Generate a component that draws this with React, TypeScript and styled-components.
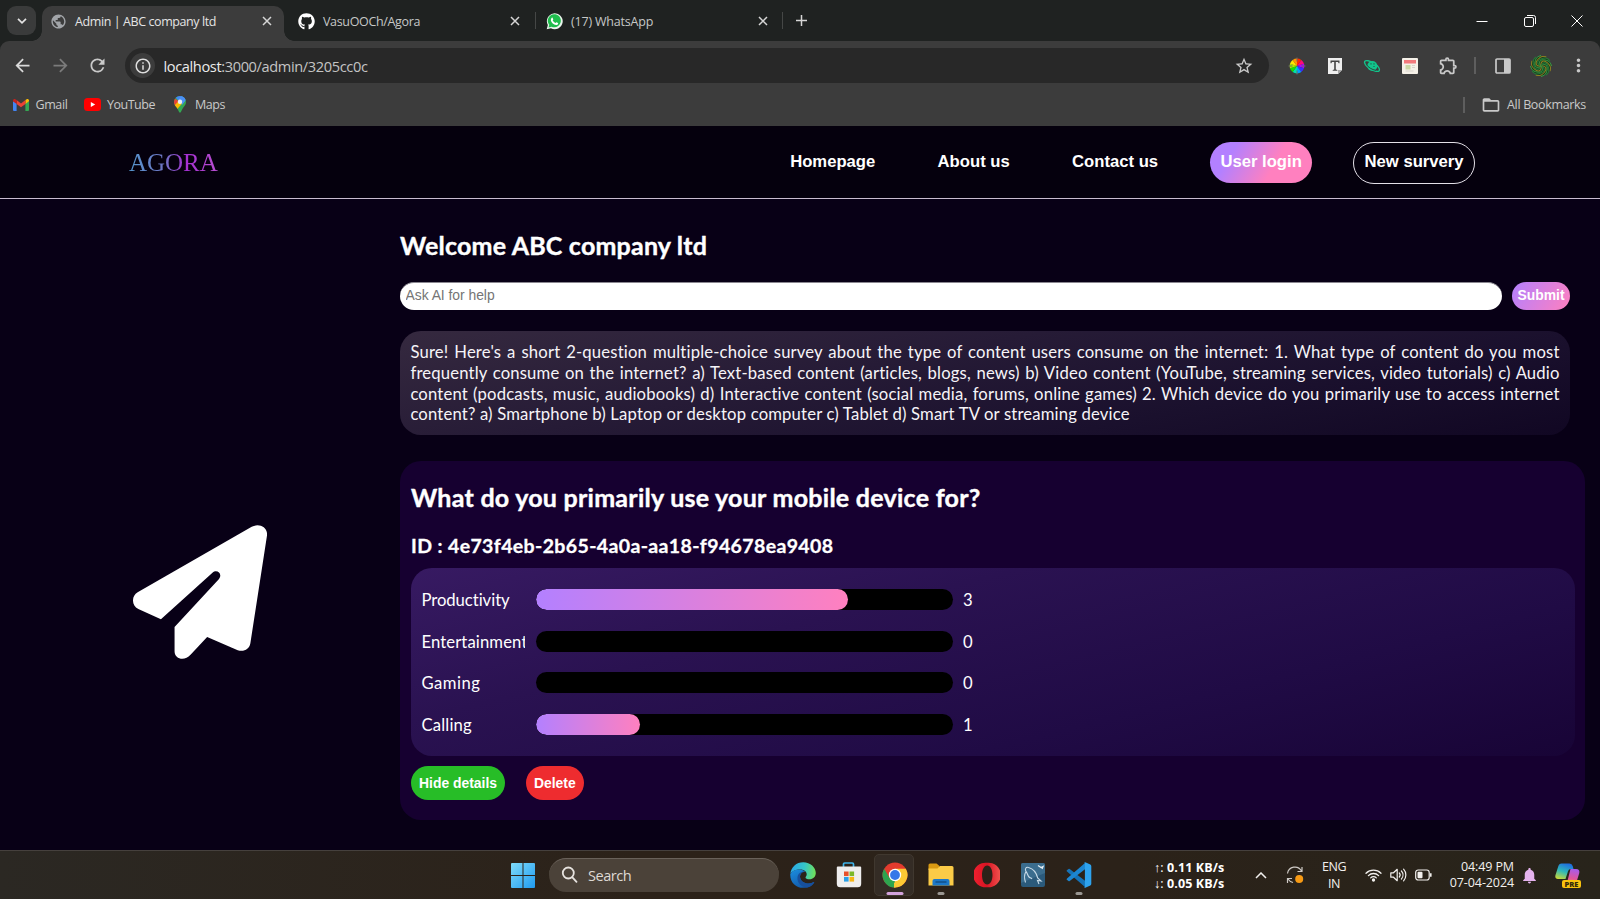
import React from "react";
import styled, { createGlobalStyle, css } from "styled-components";
import { FaGithub } from "react-icons/fa";
import {
  MdArrowBack,
  MdArrowForward,
  MdRefresh,
  MdInfoOutline,
  MdStarBorder,
  MdOutlineExtension,
  MdMoreVert,
  MdPublic,
  MdFolderOpen,
  MdNotifications,
} from "react-icons/md";

const UI = `"Open Sans", "Noto Sans", sans-serif`;
const BODY = `Lato, "Open Sans", sans-serif`;
const ARIAL = `"Liberation Sans", Arial, sans-serif`;
const ACCENT = "#b380ff, #ff80bf";

const GlobalStyle = createGlobalStyle`
  * { box-sizing: border-box; }
  html, body { margin: 0; padding: 0; background: #080016; overflow: hidden; }
  svg { display: block; flex: none; }
`;

const Screen = styled.div`
  width: 1600px;
  height: 899px;
  display: flex;
  flex-direction: column;
  overflow: hidden;
  font-family: ${UI};
`;

/* ---------- browser chrome ---------- */

const TabStrip = styled.div`
  height: 41px;
  flex: none;
  display: flex;
  align-items: stretch;
  padding-left: 7px;
  background: #1f2221;
`;

const TabSearch = styled.div`
  width: 29px;
  height: 29px;
  margin: 6px 6px 0 0;
  border-radius: 9px;
  background: #3a3b3b;
  display: grid;
  place-items: center;
`;

const Tab = styled.div<{ $width: number; $pad: number; $end: number; $active?: boolean; $ls: number }>`
  position: relative;
  width: ${(p) => p.$width}px;
  margin-top: 6px;
  padding: 0 ${(p) => p.$end}px 5px ${(p) => p.$pad}px;
  display: flex;
  align-items: center;
  gap: 8px;
  font-size: 12.5px;
  letter-spacing: ${(p) => p.$ls}px;
  color: #c6c8c7;
  ${(p) =>
    p.$active &&
    css`
      background: #3c3c3c;
      border-radius: 10px 10px 0 0;
      color: #e4e4e4;
      &::before,
      &::after {
        content: "";
        position: absolute;
        bottom: 0;
        width: 10px;
        height: 10px;
      }
      &::before {
        left: -10px;
        background: radial-gradient(circle at 0 0, transparent 9.5px, #3c3c3c 10px);
      }
      &::after {
        right: -10px;
        background: radial-gradient(circle at 100% 0, transparent 9.5px, #3c3c3c 10px);
      }
    `}
`;

const TabTitle = styled.span`
  flex: 1;
  padding-top: 1px;
  white-space: nowrap;
`;

const TabDivider = styled.i`
  width: 1px;
  height: 17px;
  margin-top: 12px;
  background: #454746;
`;

const NewTab = styled.div`
  width: 36px;
  display: grid;
  place-items: center;
`;

const WindowButtons = styled.div`
  margin: 0 17px 0 auto;
  display: flex;
  align-items: center;
  gap: 35.5px;
`;

const Toolbar = styled.div`
  height: 42px;
  position: relative;
  background: #3c3c3c;
  border-radius: 9px 9px 0 0;
  padding: 7px 0 0 12px;
  display: flex;
  align-items: center;
  color: #c9c9c9;
`;

const ToolbarWrap = styled.div`
  flex: none;
  background: #1f2221;
`;

const NavIcons = styled.div`
  width: 113px;
  flex: none;
  display: flex;
  gap: 16.5px;
`;

const Dimmed = styled.span`
  color: #7b7b7b;
`;

const Omnibox = styled.div`
  width: 1144px;
  flex: none;
  height: 35px;
  border-radius: 18px;
  background: #282828;
  padding: 0 15px 0 5px;
  display: flex;
  align-items: center;
`;

const SiteInfo = styled.span`
  width: 25px;
  height: 25px;
  margin-right: 8.5px;
  border-radius: 50%;
  background: #3c3c3c;
  display: grid;
  place-items: center;
  color: #dedede;
`;

const Url = styled.span`
  flex: 1;
  font-size: 14.6px;
  letter-spacing: -0.377px;
  color: #c4c4c4;
  b {
    font-weight: 400;
    color: #ececec;
  }
`;

const Extensions = styled.div`
  flex: 1;
  padding-left: 17px;
  display: flex;
  align-items: center;
`;

const Slot = styled.span<{ $w: number }>`
  width: ${(p) => p.$w}px;
  flex: none;
  display: grid;
  place-items: center;
`;

const Bar = styled.i<{ $h: number }>`
  width: 1.5px;
  height: ${(p) => p.$h}px;
  background: #5e5e5e;
`;

const Bookmarks = styled.div`
  height: 43px;
  flex: none;
  padding: 0 14px 0 13px;
  display: flex;
  align-items: center;
  background: #3c3c3c;
  font-size: 12.5px;
  color: #c9c9c9;
`;

const Bookmark = styled.div<{ $gap: number; $after?: number; $ls: number }>`
  display: flex;
  align-items: center;
  gap: ${(p) => p.$gap}px;
  margin-right: ${(p) => p.$after ?? 0}px;
  letter-spacing: ${(p) => p.$ls}px;
`;

const AllBookmarks = styled(Bookmark)`
  margin-left: auto;
`;

/* ---------- site ---------- */

const Site = styled.div`
  flex: 1;
  min-height: 0;
  display: flex;
  flex-direction: column;
  background: #080016;
  color: #fff;
`;

const Header = styled.header`
  height: 73px;
  flex: none;
  padding: 0 125px 0 129px;
  display: flex;
  align-items: center;
  justify-content: space-between;
  background: #05000d;
  border-bottom: 1px solid #c9bccf;
`;

const Brand = styled.span`
  margin-top: 2px;
  font: 25px "Liberation Serif", "Times New Roman", serif;
  letter-spacing: -0.05px;
  background: linear-gradient(90deg, #5596cd 0%, #6f74c4 40%, #a52fd2 64%, #b84fd0 100%);
  background-clip: text;
  -webkit-background-clip: text;
  color: transparent;
`;

const Menu = styled.nav`
  display: flex;
  align-items: center;
  gap: 41.5px;
  margin-top: 1px;
`;

const MenuLink = styled.a<{ $kind?: "filled" | "outline" }>`
  height: 41px;
  padding: 0 10.4px 2px;
  border-radius: 21px;
  display: flex;
  align-items: center;
  font: bold 16.67px ${ARIAL};
  ${(p) => p.$kind === "filled" && `margin-right: -0.6px; background: linear-gradient(120deg, #b380ff 22%, #ff80bf 62%);`}
  ${(p) => p.$kind === "outline" && `height: 42px; border: 1px solid #e4e0e8;`}
`;

const Columns = styled.div`
  flex: 1;
  min-height: 0;
  display: grid;
  grid-template-columns: 400px 1fr;
`;

const Aside = styled.aside`
  padding: 326px 0 0 133px;
`;

const Main = styled.main`
  padding: 30px 15px 0 0;
`;

const Heading = styled.h2<{ $ls: number }>`
  margin: 0;
  font: bold 25px/32px ${BODY};
  letter-spacing: ${(p) => p.$ls}px;
  -webkit-text-stroke: 0.4px #fff;
`;

const AskRow = styled.div`
  margin: 21px 15px 21px 0;
  display: flex;
  gap: 10.4px;
  height: 28px;
`;

const AskInput = styled.input`
  flex: 1;
  min-width: 0;
  border: 0;
  border-top: 1px solid #8a8790;
  border-radius: 14px;
  padding: 0 5.5px 3px;
  background: #fff;
  font: 13.9px ${ARIAL};
  letter-spacing: -0.03px;
  outline: none;
  &::placeholder {
    color: #757575;
    opacity: 1;
  }
`;

const Submit = styled.button`
  width: 58px;
  border: 0;
  border-radius: 14px;
  padding: 0 0 2px;
  background: linear-gradient(120deg, ${ACCENT});
  color: #fff;
  font: bold 13.9px ${ARIAL};
`;

const Answer = styled.p`
  margin: 0 15px 0 0;
  height: 104px;
  padding: 10.9px 10.4px 0;
  border-radius: 21px;
  background: linear-gradient(169deg, #35293f 0%, #261b36 38%, #1a102d 70%, #110723 100%);
  font: 16.67px/20.83px ${BODY};
  letter-spacing: 0.17px;
  color: #f6f4f8;
`;

const Line = styled.span<{ $last?: boolean }>`
  display: block;
  white-space: nowrap;
  text-align: justify;
  text-align-last: ${(p) => (p.$last ? "left" : "justify")};
`;

const Card = styled.section`
  margin-top: 25.5px;
  height: 359.5px;
  padding: 20px 10.5px 0 11px;
  border-radius: 21px;
  background: #160030;
`;

const SurveyId = styled.h3`
  margin: 20.5px 0 9px;
  font: bold 19.5px/26px ${BODY};
  letter-spacing: 0.37px;
  -webkit-text-stroke: 0.3px #fff;
`;

const Results = styled.div`
  height: 188px;
  padding: 21px 10.4px;
  border-radius: 21px;
  background: linear-gradient(166deg, #371a62 0%, #2a1251 32%, #200b45 68%, #180436 100%);
  display: flex;
  flex-direction: column;
  gap: 20.67px;
`;

const Result = styled.div`
  height: 21px;
  display: grid;
  grid-template: 21px / 104px 416.7px auto;
  column-gap: 10.5px;
  align-items: start;
  font: 16.67px/23px ${BODY};
`;

const Label = styled.span<{ $ls: number }>`
  overflow: hidden;
  white-space: nowrap;
  letter-spacing: ${(p) => p.$ls}px;
`;

const Track = styled.div`
  height: 21px;
  border-radius: 10.5px;
  background: #000;
  overflow: hidden;
`;

const Fill = styled.div`
  height: 100%;
  border-radius: 10.5px;
  background: linear-gradient(90deg, ${ACCENT});
`;

const Actions = styled.div`
  margin-top: 10px;
  display: flex;
  gap: 21px;
`;

const ActionButton = styled.button<{ $bg: string }>`
  height: 34px;
  padding: 0 8px 1px;
  border: 0;
  border-radius: 17px;
  background: ${(p) => p.$bg};
  color: #fff;
  font: bold 13.9px ${ARIAL};
`;

/* ---------- taskbar ---------- */

const Taskbar = styled.footer`
  height: 49px;
  flex: none;
  display: flex;
  align-items: center;
  padding-left: 511px;
  background: linear-gradient(90deg, #2b2823, #2c2219 40%, #2b2219 70%, #28241b);
  border-top: 1px solid #45403d;
  color: #f2f0ee;
  font-size: 12.5px;
`;

const SearchPill = styled.div`
  width: 230px;
  height: 34px;
  margin: 0 11px 0 14px;
  padding: 0 0 2px 12px;
  border-radius: 17px;
  background: #4b4239;
  border-top: 1px solid #6a625a;
  display: flex;
  align-items: center;
  gap: 10px;
  font-size: 14.6px;
  letter-spacing: -0.5px;
  color: #ded9d4;
`;

const DockApp = styled.div<{ $gap: number; $open?: boolean }>`
  position: relative;
  width: 26px;
  height: 26px;
  margin-right: ${(p) => p.$gap}px;
  z-index: 0;
  ${(p) =>
    p.$open &&
    css`
      &::before {
        content: "";
        position: absolute;
        z-index: -1;
        inset: -8px -6px -8px -8px;
        border-radius: 5px;
        background: #342c25;
        border: 1px solid #40382f;
      }
    `}
`;

const RunningMark = styled.i<{ $active?: boolean }>`
  position: absolute;
  left: 50%;
  bottom: -7px;
  width: ${(p) => (p.$active ? 17 : 7)}px;
  height: 3px;
  transform: translateX(-50%);
  border-radius: 2px;
  background: ${(p) => (p.$active ? "#d3a3dc" : "#9b9792")};
`;

const Tray = styled.div`
  margin-left: auto;
  padding-right: 20px;
  display: flex;
  align-items: center;
  line-height: 16.4px;
`;

const NetSpeed = styled.div`
  width: 70px;
  font-weight: 700;
  color: #fff;
  letter-spacing: 0.1px;
  white-space: nowrap;
  margin-right: 31px;
  margin-top: 2px;
  span {
    font-weight: 400;
  }
`;

const Language = styled.div`
  width: 24px;
  margin: 1px 19px 0 0;
  text-align: center;
  letter-spacing: -0.4px;
`;

const Clock = styled.div`
  width: 66px;
  margin: 0 6px 0 16px;
  text-align: right;
  letter-spacing: -0.1px;
  white-space: nowrap;
`;

const StatusIcons = styled.div`
  display: flex;
  align-items: center;
  gap: 8px;
`;

/* ---------- drawings ---------- */

const Cross = () => (
  <svg width="10" height="10" viewBox="0 0 10 10" stroke="#d6d6d6" strokeWidth="1.500">
    <path d="M1 1l8 8M9 1l-8 8" />
  </svg>
);

const WhatsApp = () => (
  <svg width="17" height="17" viewBox="0 0 24 24">
    <path d="M1 23l1.6-5.9A11.2 11.2 0 1 1 7 21.5z" fill="#e9f5ec" />
    <path d="M3.6 20.4l1-3.7A9.2 9.2 0 1 1 8 19.3z" fill="#1fbd4d" />
    <path
      d="M8.2 6.6c.5-.3 1-.1 1.200.3l.8 1.900c.1.4 0 .7-.8 1.600.9 1.800 2.200 3 4 3.700.8-.8 1.100-1.200 1.600-1l1.900 1c.5.3.3 1 .1 1.500-.5 1-1.800 1.600-2.800 1.500-3.400-.4-6.700-3.700-7.300-6.600-.200-1.500.4-3.300 1.300-3.900z"
      fill="#fff"
    />
  </svg>
);

const Gmail = () => (
  <svg width="16" height="12" viewBox="0 0 16 12">
    <path d="M0 2v9a1 1 0 0 0 1 1h2.600V4.600z" fill="#4285f4" />
    <path d="M16 2v9a1 1 0 0 1-1 1h-2.600V4.600z" fill="#34a853" />
    <path d="M12.400 1.100V5L16 2.300V1.600C16 .2 14.400-.4 13.400.4z" fill="#fbbc04" />
    <path d="M3.600 5V1.100L8 4.400l4.400-3.300V5L8 8.300z" fill="#ea4335" />
    <path d="M0 1.600v.7L3.600 5V1.100L2.600.4C1.600-.4 0 .2 0 1.600z" fill="#c5221f" />
  </svg>
);

const YouTube = () => (
  <svg width="17" height="13" viewBox="0 0 17 13">
    <rect width="17" height="13" rx="3.500" fill="#f00" />
    <path d="M6.800 3.900v5.200L11.200 6.500z" fill="#fff" />
  </svg>
);

const Maps = () => (
  <svg width="12" height="17" viewBox="0 0 12 17">
    <clipPath id="pin">
      <path d="M6 0a6 6 0 0 1 6 6c0 2.600-1.500 3.900-3 6-1.300 1.900-1.900 4.700-3 4.700S4.300 13.900 3 12C1.500 9.900 0 8.600 0 6a6 6 0 0 1 6-6z" />
    </clipPath>
    <g clipPath="url(#pin)">
      <rect width="12" height="17" fill="#34a853" />
      <path d="M0 0h12v3L6 6z" fill="#4285f4" />
      <path d="M12 1v3L8 9 4 4 7 0h2z" fill="#4a90f5" />
      <path d="M0 2l6 4-5 5-3-4z" fill="#ea4335" />
      <path d="M0 10l6-6.500 2 4-5.500 6.500z" fill="#fbbc04" />
    </g>
    <circle cx="6" cy="5.800" r="2.200" fill="#e9eef5" />
  </svg>
);

const HUES = ["#ff2a00", "#ff0a7a", "#b400ff", "#3a2cff", "#009dff", "#00e0b0", "#19e000", "#a4f000", "#ffe600", "#ff9800"];

const ColorWheel = () => (
  <svg width="18" height="18" viewBox="-9 -9 18 18">
    {HUES.map((c, i) => {
      const a = (i * 36 - 90) * (Math.PI / 180);
      const b = ((i + 1) * 36 - 90) * (Math.PI / 180);
      return (
        <path
          key={c}
          fill={c}
          d={`M0 0L${7.4 * Math.cos(a)} ${7.4 * Math.sin(a)}A7.4 7.4 0 0 1 ${7.4 * Math.cos(b)} ${7.4 * Math.sin(b)}z`}
        />
      );
    })}
    <path d="M0-8.500v4M0 8.500v-4M-8.500 0h4M8.500 0h-4" stroke="#6a6a6a" strokeWidth="1" />
  </svg>
);

const TextTool = () => (
  <svg width="14" height="16" viewBox="0 0 14 16">
    <path d="M0 0h14v12l-4 4H0z" fill="#efefef" />
    <path d="M2.500 2.500h9v2.800h-.9l-.6-1.400H7.800v7.600l1.500.5v.7H4.700V12l1.500-.5V3.900H4l-.6 1.400h-.9z" fill="#444" />
    <path d="M10 16v-4h4z" fill="#a8a8a8" />
  </svg>
);

const Planet = () => (
  <svg width="18" height="14" viewBox="0 0 18 14" fill="none">
    <circle cx="9.300" cy="7" r="5" fill="#12c48b" />
    <ellipse cx="9" cy="7" rx="8.600" ry="3.400" transform="rotate(32 9 7)" stroke="#12c48b" strokeWidth="1.400" />
    <path d="M3.300 5.400c1.500 2.600 5.600 5.400 9.800 6" stroke="#2b4a40" strokeWidth="1" />
    <path d="M7.500 4.800h1M10.500 4.800h1M10.500 7.500h1" stroke="#214d3e" strokeWidth="1.200" />
  </svg>
);

const Sheet = () => (
  <svg width="16" height="16" viewBox="0 0 16 16">
    <rect width="16" height="16" rx="1" fill="#f5f1e8" />
    <rect x="2" y="2" width="12" height="3.500" fill="#f27a7c" />
    <rect x="3.500" y="7" width="5" height="4.500" fill="#cbd9a6" />
    <path d="M10 7.500h3M10 9.500h3M3.500 13h8" stroke="#d9d5cd" />
  </svg>
);

const SidePanel = () => (
  <svg width="16" height="16" viewBox="0 0 16 16">
    <rect x="1" y="1" width="14" height="14" rx="1" fill="none" stroke="#c9c9c9" strokeWidth="1.700" />
    <path d="M9 1h6v14H9z" fill="#c9c9c9" />
  </svg>
);

const ARMS = Array.from({ length: 12 }, (_, i) => i * 30);

const Swirl = () => (
  <svg width="22" height="22" viewBox="-11 -11 22 22" fill="none">
    <circle r="9.800" fill="#1b3a1c" />
    {ARMS.map((d, i) => (
      <path
        key={d}
        d="M0 0C4-3 7-1 6 4S3 9.500 0 10.500"
        transform={`rotate(${d})`}
        stroke={["#35a045", "#8c7f22", "#257a38"][i % 3]}
        strokeWidth="1"
      />
    ))}
  </svg>
);

const Plane = () => (
  <svg width="134" height="134" viewBox="99 75 403 402" fill="#fff">
    <path d="M113 277L456 80C479 68 505 82 502 106L452 430C449 448 432 457 414 451L322 411L272 465C254 485 224 478 224 454V381L357 238C370 222 352 206 338 218L183 358L115 327C94 316 94 288 113 277z" />
  </svg>
);

const Windows = () => (
  <svg width="24" height="25" viewBox="0 0 24 25">
    <defs>
      <linearGradient id="win" x1="0" y1="0" x2="1" y2="1">
        <stop offset="0" stopColor="#7fdcfb" />
        <stop offset="1" stopColor="#1f9af0" />
      </linearGradient>
    </defs>
    <path d="M0 1Q0 0 1 0h10.500v12H0zM12.500 0H23q1 0 1 1v11H12.500zM0 13h11.500v12H1q-1 0-1-1zM12.500 13H24v11q0 1-1 1H12.500z" fill="url(#win)" />
  </svg>
);

const Magnifier = () => (
  <svg width="17" height="17" viewBox="0 0 17 17" fill="none" stroke="#e6e2de" strokeWidth="1.800" strokeLinecap="round">
    <circle cx="7.300" cy="7" r="5.500" />
    <path d="M11.400 11.300L15.500 15.800" />
  </svg>
);

const Edge = () => (
  <svg width="26" height="26" viewBox="0 0 26 26">
    <defs>
      <linearGradient id="edgeTop" x1="0" y1="0.300" x2="1" y2="0.400">
        <stop offset="0" stopColor="#2aa6ea" />
        <stop offset=".55" stopColor="#35c6c8" />
        <stop offset="1" stopColor="#6fe05a" />
      </linearGradient>
      <linearGradient id="edgeLow" x1="0" y1="0" x2="0.600" y2="1">
        <stop offset="0" stopColor="#1b8fe0" />
        <stop offset="1" stopColor="#1257a8" />
      </linearGradient>
    </defs>
    <path d="M.3 12C1 5 6.500.3 13.200.3 20.500.3 25.800 5.600 25.800 11c0 3.800-2.800 6.300-6.300 6.300-2.300 0-4-.7-4-1.800 0-.9 1.200-1.300 1.200-3.300 0-2.500-2.600-4.700-6.200-4.700C5.500 7.500 1.500 9.600.3 12z" fill="url(#edgeTop)" />
    <path d="M.3 12C2 8.700 5.600 7.200 9.500 7.400c3 .2 5 1.400 6 2.600-3-1-5.500 1.400-5.500 4.500 0 4.500 4.400 7 8.500 7 2.400 0 4-.8 5.100-1.400.4-.2.7.2.5.6A12.800 12.800 0 0 1 13 25.800C5.800 25.800-.2 20 .3 12z" fill="url(#edgeLow)" />
    <path d="M10 14.500c0 4.500 4.400 7 8.500 7 2.400 0 4-.8 5.100-1.400.4-.2.700.2.500.6-1.600 2.600-4 4.300-7 4.900C11 25.300 7 20.500 7.500 15.500 7.800 12 10.500 9 15.500 10 12.500 9.500 10 11.400 10 14.500z" fill="#174f9c" />
  </svg>
);

const Store = () => (
  <svg width="26" height="26" viewBox="0 0 26 26">
    <path d="M7.500 6V2.200Q7.500 1 8.700 1h7.600q1.200 0 1.200 1.200V6" fill="none" stroke="#3eb4ea" strokeWidth="1.700" />
    <path d="M.8 5.500q0-1 1-1h22.400q1 0 1 1v16.200q0 3.500-3.500 3.500H4.300q-3.500 0-3.500-3.500z" fill="#efeeee" />
    <path d="M8 9.500h4.600v4.600H8z" fill="#e8502a" />
    <path d="M13.500 9.500h4.600v4.600h-4.600z" fill="#7cb82a" />
    <path d="M8 15h4.600v4.600H8z" fill="#2a9fe8" />
    <path d="M13.500 15h4.600v4.600h-4.600z" fill="#f7b616" />
  </svg>
);

const Chrome = () => (
  <svg width="26" height="26" viewBox="-13 -13 26 26">
    <circle r="12.500" fill="#e33b2e" />
    <path d="M-10.800-6.250L-5.400 3.100L0 6.250L1 12.450A12.500 12.500 0 0 1-10.800-6.250z" fill="#2ea44f" />
    <path d="M10.800-6.250H0V6.200L-.8 12.480A12.500 12.500 0 0 0 10.800-6.250z" fill="#fcc934" />
    <path d="M5.400 3.100L0 12.500H-1L-1 8z" fill="#fcc934" />
    <circle r="6.200" fill="#fff" />
    <circle r="4.900" fill="#3577e8" />
  </svg>
);

const Explorer = () => (
  <svg width="26" height="26" viewBox="0 0 26 26">
    <path d="M.5 3q0-1.500 1.500-1.500h6.500L11.500 4v4H.5z" fill="#d99a13" />
    <path d="M.5 6.500h9L12 4h12q1.500 0 1.500 1.500V23.500H.5z" fill="#fbcb47" />
    <path d="M4.500 23.500V19q0-2 2-2h13q2 0 2 2v4.500z" fill="#1c78c8" />
    <path d="M7.500 20h11" stroke="#114f88" strokeWidth="1.500" />
  </svg>
);

const Opera = () => (
  <svg width="26" height="26" viewBox="0 0 26 26">
    <defs>
      <linearGradient id="opera" x1="0" y1="0" x2="1" y2="0">
        <stop offset="0" stopColor="#f0202f" />
        <stop offset=".5" stopColor="#d81423" />
        <stop offset="1" stopColor="#f25550" />
      </linearGradient>
    </defs>
    <path fillRule="evenodd" d="M13 .8a12.300 12.300 0 1 1 0 24.400A12.300 12.300 0 1 1 13 .8zM13.200 3.500C9.800 3.500 8 8 8 13s1.800 9.500 5.200 9.500S18.500 18 18.500 13s-1.900-9.500-5.300-9.500z" fill="url(#opera)" />
  </svg>
);

const MySql = () => (
  <svg width="26" height="26" viewBox="0 0 26 26" fill="none">
    <rect x="1" y="1" width="24" height="24" rx="2" fill="#2b5a7b" />
    <path d="M1 3q0-2 2-2h20q2 0 2 2v8L1 21z" fill="#3b6d8e" />
    <path d="M5.500 20.500C4 16 4.500 12 6 9.500 4.500 7 6 4.500 8.500 5.500c5 1.300 8 5.500 9.200 10.500l3.300 3-3.500-.5 1.500 3.500M6 9.500c1.500 1.500 1.500 4 3 5.500 1 1 2 .5 3 2" stroke="#c8dbe8" strokeWidth="1.100" />
    <path d="M18 3.500l3 2 2-1-1 2.500" stroke="#e9f2f8" strokeWidth="1.300" />
  </svg>
);

const VsCode = () => (
  <svg width="26" height="26" viewBox="0 0 26 26">
    <path d="M.8 8.200l1.700-1.300q.6-.4 1.200 0L19 18.800V25L1 9.600q-.7-.7-.2-1.400z" fill="#1573b8" />
    <path d="M.8 17.800l1.700 1.300q.6.400 1.200 0L19 7.200V1L1 16.400q-.7.700-.2 1.400z" fill="#1c86d1" />
    <path d="M18.200.6q.8-.6 1.700-.1l4.400 2.100q1 .5 1 1.600v17.600q0 1.100-1 1.600l-4.400 2.100q-.9.500-1.700-.1.700-.1.700-1.200V1.800q0-1-.7-1.200z" fill="#2ea3ee" />
  </svg>
);

const Sync = () => (
  <svg width="18" height="20" viewBox="0 0 18 20" fill="none" stroke="#cfcbc7" strokeWidth="1.200">
    <path d="M1.500 8.500A7.500 7.500 0 0 1 15.500 6M16 2v4.500h-4.500M7 17.500A8 8 0 0 1 2 14M1.500 18v-4.500H6" />
    <circle cx="13.200" cy="14" r="4" fill="#f79a14" stroke="none" />
  </svg>
);

const Wifi = () => (
  <svg width="17" height="14" viewBox="0 0 17 14" fill="none" stroke="#f2f0ee" strokeWidth="1.300" strokeLinecap="round">
    <path d="M1 5.200a10.600 10.600 0 0 1 15 0M3.400 7.600a7.200 7.200 0 0 1 10.200 0M5.700 9.900a4 4 0 0 1 5.600 0" />
    <circle cx="8.500" cy="12" r="1" fill="#f2f0ee" />
  </svg>
);

const Speaker = () => (
  <svg width="17" height="14" viewBox="0 0 17 14" fill="none" stroke="#f2f0ee" strokeWidth="1.200" strokeLinecap="round" strokeLinejoin="round">
    <path d="M.8 4.800h2.700L7.200 1.300v11.400L3.500 9.200H.8zM9.300 5a3 3 0 0 1 0 4M11.400 3a6 6 0 0 1 0 8M13.600 1.200a8.600 8.600 0 0 1 0 11.600" />
  </svg>
);

const Battery = () => (
  <svg width="17" height="12" viewBox="0 0 17 12">
    <rect x=".7" y="1" width="13.500" height="10" rx="2.500" fill="none" stroke="#f2f0ee" strokeWidth="1.200" />
    <rect x="2.500" y="2.800" width="5" height="6.400" rx="1" fill="#f2f0ee" />
    <path d="M15 4.200h1.600v3.600H15z" fill="#f2f0ee" />
  </svg>
);

const PreLabel = styled.span`
  position: absolute;
  right: -1px;
  bottom: 0;
  width: 19px;
  height: 8px;
  border-radius: 2px;
  background: #f8c20f;
  color: #33290a;
  font: 800 7.5px/8px ${UI};
  text-align: center;
`;

const CopilotBox = styled.div`
  position: relative;
  width: 25px;
  height: 25px;
  margin-left: 16px;
`;

const Copilot = () => (
  <CopilotBox>
    <svg width="25" height="22" viewBox="0 0 25 22">
      <defs>
        <linearGradient id="cpA" x1="0.600" y1="0" x2="0.200" y2="1">
          <stop offset="0" stopColor="#1f6fe0" />
          <stop offset=".5" stopColor="#2fb8b8" />
          <stop offset="1" stopColor="#c9d838" />
        </linearGradient>
        <linearGradient id="cpB" x1="0.500" y1="0" x2="0.300" y2="1">
          <stop offset="0" stopColor="#a95be8" />
          <stop offset=".6" stopColor="#e0559a" />
          <stop offset="1" stopColor="#f59058" />
        </linearGradient>
      </defs>
      <path d="M6.500.5h8q2.500 0 3.300 2.800L18.500 6h-2.800q-2 0-2.700 2.200L10.500 16H3Q-.5 16 .5 12L3.200 3.500Q4 .5 6.500.5z" fill="url(#cpA)" />
      <path d="M15.500 6h5.500q4 0 3.300 4l-2.500 8q-1 3-3.500 3H9.500q2 0 2.800-2.500z" fill="url(#cpB)" />
    </svg>
    <PreLabel>PRE</PreLabel>
  </CopilotBox>
);

/* ---------- data ---------- */

const answerLines = [
  "Sure! Here's a short 2-question multiple-choice survey about the type of content users consume on the internet: 1. What type of content do you most",
  "frequently consume on the internet? a) Text-based content (articles, blogs, news) b) Video content (YouTube, streaming services, video tutorials) c) Audio",
  "content (podcasts, music, audiobooks) d) Interactive content (social media, forums, online games) 2. Which device do you primarily use to access internet",
  "content? a) Smartphone b) Laptop or desktop computer c) Tablet d) Smart TV or streaming device",
];

const results = [
  { label: "Productivity", votes: 3, spacing: -0.04 },
  { label: "Entertainment", votes: 0, spacing: 0.12 },
  { label: "Gaming", votes: 0, spacing: 0.49 },
  { label: "Calling", votes: 1, spacing: 0.18 },
];
const total = results.reduce((sum, r) => sum + r.votes, 0);

export default function App() {
  return (
    <Screen>
      <GlobalStyle />
      <TabStrip>
        <TabSearch>
          <svg width="10" height="6" viewBox="0 0 10 6" fill="none" stroke="#e3e3e3" strokeWidth="1.700">
            <path d="M1 .8l4 4 4-4" />
          </svg>
        </TabSearch>
        <Tab $width={242} $pad={8} $end={12} $active $ls={-0.41}>
          <MdPublic size={17} color="#a2a5a9" />
          <TabTitle>Admin | ABC company ltd</TabTitle>
          <Cross />
        </Tab>
        <Tab $width={251} $pad={14} $end={15} $ls={-0.34}>
          <FaGithub size={17} color="#fff" />
          <TabTitle>VasuOOCh/Agora</TabTitle>
          <Cross />
        </Tab>
        <TabDivider />
        <Tab $width={246} $pad={10} $end={14} $ls={-0.2}>
          <WhatsApp />
          <TabTitle>(17) WhatsApp</TabTitle>
          <Cross />
        </Tab>
        <TabDivider />
        <NewTab>
          <svg width="11" height="11" viewBox="0 0 11 11" stroke="#d6d6d6" strokeWidth="1.500">
            <path d="M5.500 0v11M0 5.500h11" />
          </svg>
        </NewTab>
        <WindowButtons>
          <svg width="12" height="12" viewBox="0 0 12 12" stroke="#fff" strokeWidth="1">
            <path d="M.5 6.500h11" />
          </svg>
          <svg width="12" height="12" viewBox="0 0 12 12" fill="none" stroke="#fff" strokeWidth="1">
            <rect x=".5" y="2.500" width="9" height="9" rx="1.500" />
            <path d="M3 .5h6.500a2 2 0 0 1 2 2V9" />
          </svg>
          <svg width="12" height="12" viewBox="0 0 12 12" stroke="#fff" strokeWidth="1">
            <path d="M.5.5l11 11M11.500.5l-11 11" />
          </svg>
        </WindowButtons>
      </TabStrip>

      <ToolbarWrap>
        <Toolbar>
          <NavIcons>
            <MdArrowBack size={21} color="#dadada" />
            <Dimmed>
              <MdArrowForward size={21} />
            </Dimmed>
            <MdRefresh size={21} />
          </NavIcons>
          <Omnibox>
            <SiteInfo>
              <MdInfoOutline size={18} />
            </SiteInfo>
            <Url>
              <b>localhost</b>:3000/admin/3205cc0c
            </Url>
            <MdStarBorder size={20} />
          </Omnibox>
          <Extensions>
            <Slot $w={22}><ColorWheel /></Slot>
            <Slot $w={53}><TextTool /></Slot>
            <Slot $w={22}><Planet /></Slot>
            <Slot $w={53}><Sheet /></Slot>
            <Slot $w={24}><MdOutlineExtension size={21} /></Slot>
            <Slot $w={30}><Bar $h={17} /></Slot>
            <Slot $w={25}><SidePanel /></Slot>
            <Slot $w={51}><Swirl /></Slot>
            <Slot $w={24}><MdMoreVert size={21} /></Slot>
          </Extensions>
        </Toolbar>
      </ToolbarWrap>
      <Bookmarks>
        <Bookmark $gap={6.5} $after={16.5} $ls={-0.4}><Gmail />Gmail</Bookmark>
        <Bookmark $gap={6} $after={19} $ls={-0.48}><YouTube />YouTube</Bookmark>
        <Bookmark $gap={9} $ls={-0.43}><Maps />Maps</Bookmark>
        <AllBookmarks $gap={6} $ls={-0.33}>
          <Slot $w={22}><Bar $h={16} /></Slot>
          <MdFolderOpen size={20} />
          All Bookmarks
        </AllBookmarks>
      </Bookmarks>

      <Site>
        <Header>
          <Brand>AGORA</Brand>
          <Menu>
            <MenuLink>Homepage</MenuLink>
            <MenuLink>About us</MenuLink>
            <MenuLink>Contact us</MenuLink>
            <MenuLink $kind="filled">User login</MenuLink>
            <MenuLink $kind="outline">New survery</MenuLink>
          </Menu>
        </Header>
        <Columns>
          <Aside><Plane /></Aside>
          <Main>
            <Heading $ls={0.2}>Welcome ABC company ltd</Heading>
            <AskRow>
              <AskInput placeholder="Ask AI for help" />
              <Submit>Submit</Submit>
            </AskRow>
            <Answer>
              {answerLines.map((line, i) => (
                <Line key={line} $last={i === answerLines.length - 1}>{line}</Line>
              ))}
            </Answer>
            <Card>
              <Heading $ls={0.26}>What do you primarily use your mobile device for?</Heading>
              <SurveyId>ID : 4e73f4eb-2b65-4a0a-aa18-f94678ea9408</SurveyId>
              <Results>
                {results.map((r) => (
                  <Result key={r.label}>
                    <Label $ls={r.spacing}>{r.label}</Label>
                    <Track>
                      <Fill style={{ width: `${(r.votes / total) * 100}%` }} />
                    </Track>
                    <span>{r.votes}</span>
                  </Result>
                ))}
              </Results>
              <Actions>
                <ActionButton $bg="#27bd27">Hide details</ActionButton>
                <ActionButton $bg="#ee2c2f">Delete</ActionButton>
              </Actions>
            </Card>
          </Main>
        </Columns>
      </Site>

      <Taskbar>
        <Windows />
        <SearchPill>
          <Magnifier />
          Search
        </SearchPill>
        <DockApp $gap={20}><Edge /></DockApp>
        <DockApp $gap={20}><Store /></DockApp>
        <DockApp $gap={20} $open><Chrome /><RunningMark $active /></DockApp>
        <DockApp $gap={20}><Explorer /><RunningMark /></DockApp>
        <DockApp $gap={20}><Opera /></DockApp>
        <DockApp $gap={20}><MySql /></DockApp>
        <DockApp $gap={0}><VsCode /><RunningMark /></DockApp>
        <Tray>
          <NetSpeed>
            <div><span>↑:</span> 0.11 KB/s</div>
            <div><span>↓:</span> 0.05 KB/s</div>
          </NetSpeed>
          <svg width="12" height="7" viewBox="0 0 12 7" fill="none" stroke="#f2f0ee" strokeWidth="1.500">
            <path d="M1 6l5-5 5 5" />
          </svg>
          <Slot $w={55}><Sync /></Slot>
          <Language>ENG<br />IN</Language>
          <StatusIcons><Wifi /><Speaker /><Battery /></StatusIcons>
          <Clock>04:49 PM<br />07-04-2024</Clock>
          <MdNotifications size={19} color="#e5b3ee" />
          <Copilot />
        </Tray>
      </Taskbar>
    </Screen>
  );
}
